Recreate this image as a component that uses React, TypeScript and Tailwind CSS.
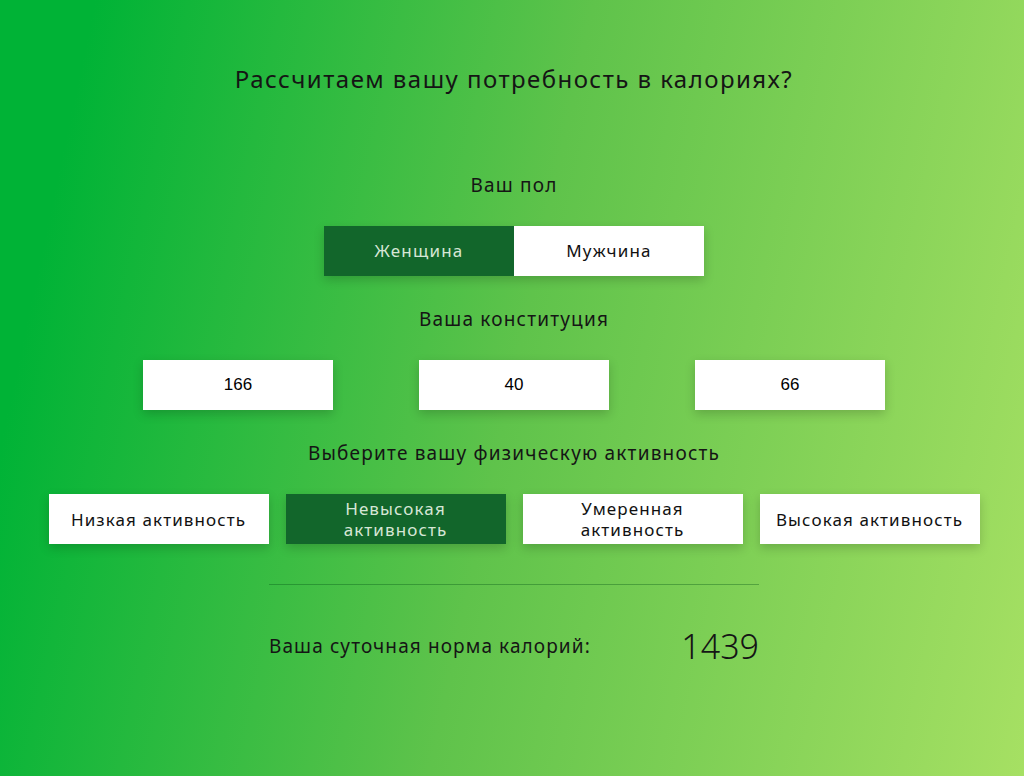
import { useState } from 'react';

const font = { fontFamily: '"Noto Sans", "Open Sans", sans-serif' };

const ACTIVITIES = [
  'Низкая активность',
  'Невысокая активность',
  'Умеренная активность',
  'Высокая активность',
];

export default function App() {
  const [sex, setSex] = useState<'f' | 'm'>('f');
  const [activity, setActivity] = useState(1);
  const [height, setHeight] = useState('166');
  const [age, setAge] = useState('40');
  const [weight, setWeight] = useState('66');

  return (
    <div
      className="w-full min-h-[776px] bg-[linear-gradient(102deg,#00b336_8%,#5fc34b_50%,#a6e063_100%)] text-[#151515] flex flex-col items-center pl-[4px] pt-[62px]"
      style={font}
    >
      <h1 className="text-[24px] leading-[34px] tracking-[1.45px]">Рассчитаем вашу потребность в калориях?</h1>

      {/* пол */}
      <div className="mt-[76px] text-[19px] leading-[26px] tracking-[1.2px]">Ваш пол</div>
      <div className="mt-[28px] flex shadow-[0_4px_10px_rgba(0,0,0,0.18)]">
        <button
          onClick={() => setSex('f')}
          className={`w-[190px] h-[50px] text-[17px] tracking-[1.2px] ${sex === 'f' ? 'bg-[#12662b] text-[#d6e6d6]' : 'bg-white text-[#111]'}`}
        >
          Женщина
        </button>
        <button
          onClick={() => setSex('m')}
          className={`w-[190px] h-[50px] text-[17px] tracking-[1.2px] ${sex === 'm' ? 'bg-[#12662b] text-[#d6e6d6]' : 'bg-white text-[#111]'}`}
        >
          Мужчина
        </button>
      </div>

      {/* конституция */}
      <div className="mt-[30px] text-[19px] leading-[26px] tracking-[1.2px]">Ваша конституция</div>
      <div className="mt-[28px] flex gap-[86px]">
        {[
          [height, setHeight],
          [age, setAge],
          [weight, setWeight],
        ].map(([v, set], i) => (
          <input
            key={i}
            value={v as string}
            onChange={(e) => (set as (s: string) => void)(e.target.value)}
            className="w-[190px] h-[50px] bg-white text-center text-[17px] text-black outline-none shadow-[0_4px_10px_rgba(0,0,0,0.18)]"
            style={{ fontFamily: '"Liberation Sans", Arial, sans-serif' }}
          />
        ))}
      </div>

      {/* активность */}
      <div className="mt-[30px] text-[19px] leading-[26px] tracking-[1.2px]">Выберите вашу физическую активность</div>
      <div className="mt-[28px] flex gap-[17px]">
        {ACTIVITIES.map((a, i) => (
          <button
            key={a}
            onClick={() => setActivity(i)}
            className={`w-[220px] h-[50px] px-[14px] text-[17px] leading-[21px] tracking-[1.1px] shadow-[0_4px_10px_rgba(0,0,0,0.18)] ${
              activity === i ? 'bg-[#12662b] text-[#d6e6d6]' : 'bg-white text-[#111]'
            }`}
          >
            {a}
          </button>
        ))}
      </div>

      <div className="mt-[40px] w-[490px] h-px bg-[rgba(0,80,20,0.35)]" />

      <div className="mt-[41px] w-[490px] flex items-center justify-between">
        <span className="text-[19px] tracking-[1.1px]">Ваша суточная норма калорий:</span>
        <span className="text-[34px] font-light leading-[40px]">1439</span>
      </div>
    </div>
  );
}
